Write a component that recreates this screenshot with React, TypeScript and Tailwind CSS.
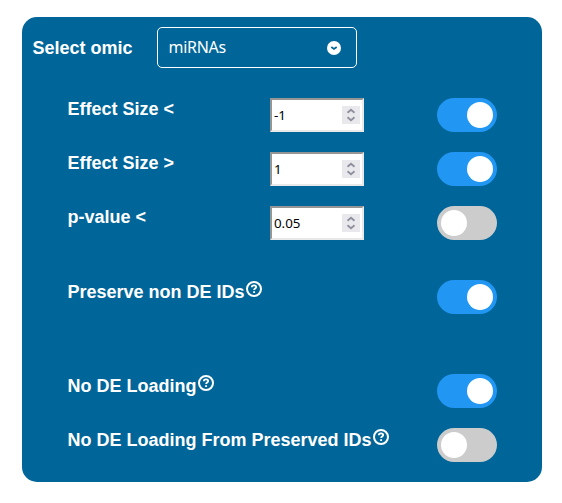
import { useState } from "react";

type Row = {
  label: string;
  value?: string;
  on: boolean;
  help?: boolean;
  height: string;
};

const rows: Row[] = [
  { label: "Effect Size <", value: "-1", on: true, height: "h-[54px]" },
  { label: "Effect Size >", value: "1", on: true, height: "h-[54px]" },
  { label: "p-value <", value: "0.05", on: false, height: "h-[74px]" },
  { label: "Preserve non DE IDs", on: true, help: true, height: "h-[94px]" },
  { label: "No DE Loading", on: true, help: true, height: "h-[54px]" },
  { label: "No DE Loading From Preserved IDs", on: false, help: true, height: "h-[54px]" },
];

function HelpIcon() {
  return (
    <svg viewBox="0 0 16 16" className="ml-px size-4 shrink-0" fill="none" stroke="white">
      <circle cx="8" cy="8" r="7" strokeWidth="2" />
      <path d="M5.8 6.2C5.8 4.9 6.7 4.3 8 4.3s2.2.7 2.2 1.8c0 1.5-2.1 1.4-2.1 3" strokeWidth="1.8" />
      <path d="M8.1 10.2V12" strokeWidth="1.9" />
    </svg>
  );
}

function NumberField({ value }: { value: string }) {
  return (
    <div className="flex h-[34px] w-[94px] items-center justify-between border-2 border-t-[#959595] border-r-[#e9e9e9] border-b-[#e9e9e9] border-l-[#959595] bg-white pr-0.5 pl-0.5 font-['Noto_Sans',sans-serif] text-[13.333px] font-normal text-black">
      <span>{value}</span>
      <svg viewBox="0 0 18 18" className="h-[18px] w-[18px] bg-[#e9e9ed]" fill="none" stroke="#8f8f9d" strokeWidth="1.8">
        <path d="M5.5 6.7 9 3.7l3.5 3M5.5 11.3l3.5 3 3.5-3" />
      </svg>
    </div>
  );
}

function Toggle({ initial, label }: { initial: boolean; label: string }) {
  const [on, setOn] = useState(initial);
  return (
    <button
      role="switch"
      aria-checked={on}
      aria-label={label}
      onClick={() => setOn(!on)}
      className={`flex h-[34px] w-[60px] items-center rounded-full px-1 ${on ? "justify-end bg-[#2196f3]" : "justify-start bg-[#cccccc]"}`}
    >
      <span className="size-[26px] rounded-full bg-white" />
    </button>
  );
}

export default function App() {
  return (
    <main className="h-[503px] w-[562px] bg-white pt-[17px] pl-[22px] font-['Liberation_Sans',Arial,sans-serif] text-lg font-bold text-white">
      <section className="h-[465px] w-[520px] rounded-[15px] bg-[#006699] pt-2.5">
        <div className="flex h-[41px] items-center pl-[10.5px]">
          <span className="w-[124.5px]">Select omic</span>
          <div className="flex h-[41px] w-[200px] items-center justify-between rounded-[5px] border border-white pr-[15px] pl-[10.5px] font-['Noto_Sans',sans-serif] text-base font-normal">
            <span className="pb-0.5 tracking-[-0.3px]">miRNAs</span>
            <svg viewBox="0 0 14 14" className="size-3.5">
              <circle cx="7" cy="7" r="7" fill="white" />
              <path d="m4.3 6 2.7 2 2.7-2" fill="none" stroke="#006699" strokeWidth="1.7" />
            </svg>
          </div>
        </div>
        <div className="pt-[30px]">
          {rows.map((row) => (
            <div key={row.label} className={`grid grid-cols-[202.5px_167px_60px] items-start pl-[45.5px] ${row.height}`}>
              <div className="flex items-start leading-[22px] whitespace-nowrap">
                <span className={row.help ? "pt-px" : ""}>{row.label}</span>
                {row.help && <span className="pt-px"><HelpIcon /></span>}
              </div>
              <div>{row.value && <NumberField value={row.value} />}</div>
              <Toggle initial={row.on} label={row.label} />
            </div>
          ))}
        </div>
      </section>
    </main>
  );
}
